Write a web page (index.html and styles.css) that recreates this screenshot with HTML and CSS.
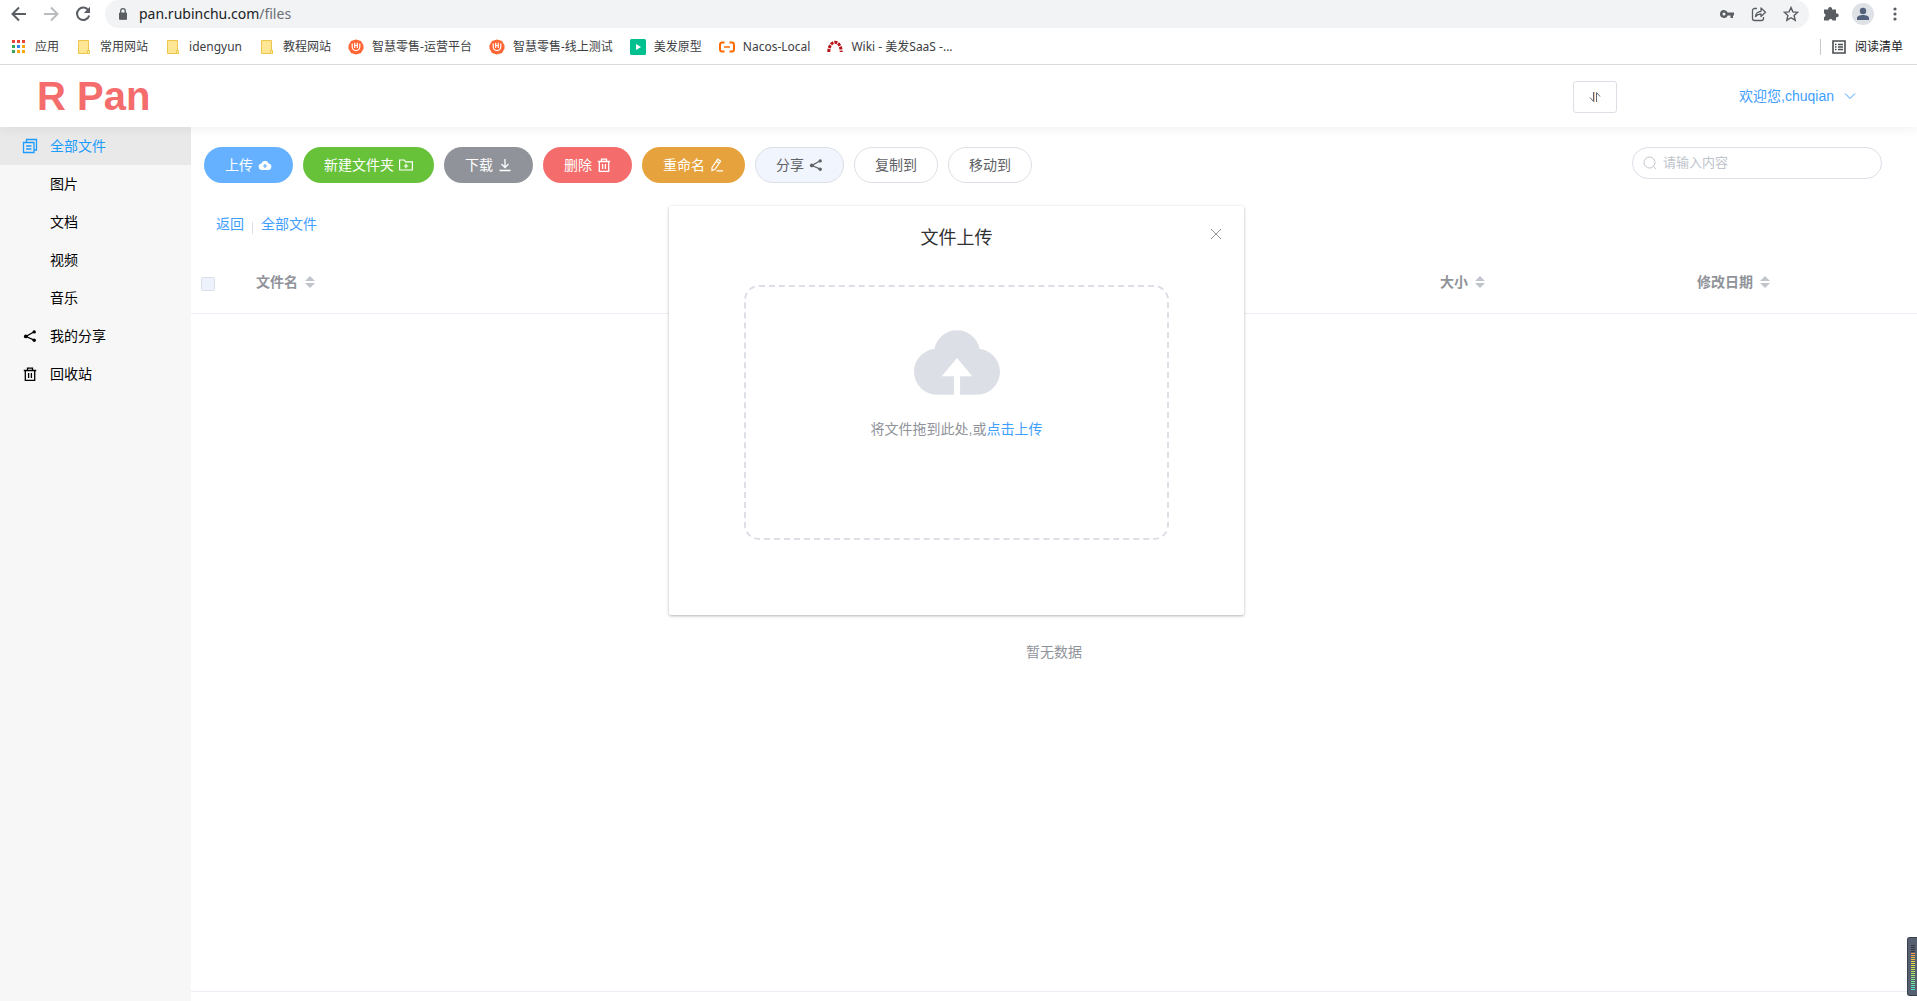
FILE: index.html
```html
<!DOCTYPE html>
<html lang="zh-CN">
<head>
<meta charset="utf-8">
<title>R Pan</title>
<link rel="stylesheet" href="styles.css">
</head>
<body>
<svg class="sprite" aria-hidden="true">
  <symbol id="cloud" viewBox="64 192 896 672"><path fill="currentColor" d="M544 864V672h128L512 480 352 672h128v192H320v-1.600c-5.376.32-10.496 1.600-16 1.600A240 240 0 0 1 64 624c0-123.136 93.120-223.488 212.608-237.248A239.808 239.808 0 0 1 512 192a239.872 239.872 0 0 1 235.456 194.752c119.488 13.760 212.480 114.112 212.480 237.248a240 240 0 0 1-240 240c-5.376 0-10.560-1.280-16-1.600v1.600H544z"/></symbol>
  <symbol id="folder" viewBox="0 0 16 16"><path d="M2.500 1.500h10v10.500h1v2.500h-11z" fill="#ffe694" stroke="#edc548"/><path d="M11.500 14.500v-3h2v3z" fill="#fff0b8" stroke="#edc548"/></symbol>
  <symbol id="hex" viewBox="0 0 16 16"><path d="M8 .5l5 1.500 2.500 4.500v3L13 14l-5 1.500L3 14 .5 9.500v-3L3 2z" fill="#ff6633"/><path d="M4.200 4.500v3.300c0 5 7.600 5 7.600 0V4.500M6.700 3.800v5.200M9.300 3.800v5.200M6.700 6.500h2.600" fill="none" stroke="#fff" stroke-width="1.200"/></symbol>
  <symbol id="share" viewBox="0 0 14 14"><path d="M11.200 2.800L3 7.500l8.200 3.700" fill="none" stroke="currentColor" stroke-width="1.300"/><g fill="currentColor"><circle cx="11.200" cy="2.900" r="1.700"/><circle cx="2.800" cy="7.400" r="1.900"/><circle cx="11.200" cy="11.300" r="1.700"/></g></symbol>
  <symbol id="trash" viewBox="0 0 14 14"><path d="M.8 3.500h12.400M4.500 3.300V1.200h5v2.100M2.300 3.500v9.800h9.400V3.500M5.600 6v5M8.400 6v5" fill="none" stroke="currentColor" stroke-width="1.300"/></symbol>
  <symbol id="sort" viewBox="0 0 10 12"><path d="M0 5l5-5 5 5zM0 7h10l-5 5z" fill="#c0c4cc"/></symbol>
</svg>

<header class="browser">
  <div class="toolbar">
    <button class="tool" aria-label="后退"><svg viewBox="0 0 16 16"><path d="M15 8H2M8 1.500L1.500 8 8 14.500" fill="none" stroke="#5a5e63" stroke-width="2"/></svg></button>
    <button class="tool" aria-label="前进"><svg viewBox="0 0 16 16"><path d="M1 8h13M8 1.500L14.500 8 8 14.500" fill="none" stroke="#b9bbbe" stroke-width="2"/></svg></button>
    <button class="tool" aria-label="刷新"><svg viewBox="0 0 16 16"><path d="M13.500 4.500A6.200 6.200 0 1 0 14.200 9.500" fill="none" stroke="#5a5e63" stroke-width="2"/><path d="M15 .8V7H8.800z" fill="#5a5e63"/></svg></button>
    <div class="omnibox">
      <svg class="lock" viewBox="0 0 10 12"><path d="M1.500 5h7v6.300h-7z" fill="#5a5e63" stroke="#5a5e63" stroke-linejoin="round"/><path d="M2.700 5V3a2.300 2.300 0 0 1 4.600 0v2" fill="none" stroke="#5a5e63" stroke-width="1.300"/></svg>
      <span class="url">pan.rubinchu.com<span class="path">/files</span></span>
      <svg class="ico" viewBox="0 0 16 16"><path d="M5 4a4 4 0 1 0 3.700 5.500h2.800V12h2.500V9.500h1v-3H8.700A4 4 0 0 0 5 4zm0 2.500a1.500 1.500 0 1 1 0 3 1.500 1.500 0 0 1 0-3z" fill="#5a5e63"/></svg>
      <svg class="ico" viewBox="0 0 16 16"><path d="M6 2.500H3.500a2 2 0 0 0-2 2v8a2 2 0 0 0 2 2h7a2 2 0 0 0 2-2V11M4.500 10.500c.3-3.500 2.500-5 5.500-5.200V2l4.500 4.200L10 10.500V8C7.500 8 6 8.800 4.500 10.500z" fill="none" stroke="#5a5e63" stroke-width="1.300" stroke-linejoin="round"/></svg>
      <svg class="ico" viewBox="0 0 16 16"><path d="M8 1.500l1.900 4.400 4.800.4-3.600 3.200 1.100 4.700L8 11.700l-4.200 2.500 1.100-4.700L1.300 6.300l4.800-.4z" fill="none" stroke="#5a5e63" stroke-width="1.400"/></svg>
    </div>
    <svg class="ico" viewBox="0 0 16 16"><path d="M1 3.500h4.200a2 2 0 1 1 3.800 0h4v4a2 2 0 1 1 0 3.700V14.500H9.500a1.900 1.900 0 0 0-3.700 0H1v-3.500a1.900 1.900 0 0 0 0-3.700z" fill="#5a5e63"/></svg>
    <svg class="avatar" viewBox="0 0 22 22"><circle cx="11" cy="11" r="11" fill="#dee1e6"/><circle cx="11" cy="8" r="3.200" fill="#53627c"/><path d="M5 17v-2c0-4 12-4 12 0v2z" fill="#53627c"/></svg>
    <svg class="ico" viewBox="0 0 16 16"><g fill="#5a5e63"><circle cx="8" cy="3" r="1.600"/><circle cx="8" cy="8" r="1.600"/><circle cx="8" cy="13" r="1.600"/></g></svg>
  </div>
  <nav class="bookmarks">
    <a href="#"><svg viewBox="0 0 16 16"><path d="M1 1h3v3H1zM6 1h3v3H6zM11 1h3v3h-3z" fill="#ea4335"/><path d="M1 6h3v3H1zM1 11h3v3H1z" fill="#34a853"/><path d="M6 6h3v3H6z" fill="#2a86f0"/><path d="M11 6h3v3h-3zM6 11h3v3H6zM11 11h3v3h-3z" fill="#fba70c"/></svg>应用</a>
    <a href="#"><svg><use href="#folder"/></svg>常用网站</a>
    <a href="#"><svg><use href="#folder"/></svg>idengyun</a>
    <a href="#"><svg><use href="#folder"/></svg>教程网站</a>
    <a href="#"><svg><use href="#hex"/></svg>智慧零售-运营平台</a>
    <a href="#"><svg><use href="#hex"/></svg>智慧零售-线上测试</a>
    <a href="#"><svg viewBox="0 0 16 16"><rect width="16" height="16" rx="1.500" fill="#00c08f"/><path d="M6 5l5 3-5 3z" fill="#fff"/></svg>美发原型</a>
    <a href="#"><svg viewBox="0 0 16 16"><path d="M5.500 3.500H3Q1 3.500 1 6v4q0 2.500 2 2.500h2.500M10.500 3.500H13q2 0 2 2.500v4q0 2.500-2 2.500h-2.500" fill="none" stroke="#ff6a00" stroke-width="2"/><path d="M5 8h6" stroke="#ff6a00" stroke-width="1.500"/></svg>Nacos-Local</a>
    <a href="#"><svg viewBox="0 0 16 16"><path d="M1.800 13C2 0 14 0 14.200 13" fill="none" stroke="#b8151b" stroke-width="3" stroke-dasharray="3 1"/></svg>Wiki - 美发SaaS -...</a>
    <a class="reading" href="#"><svg viewBox="0 0 16 16"><path d="M2 2h12v12H2z" fill="none" stroke="#4a4d51" stroke-width="1.600"/><path d="M4 5.500h1.500M4 8h1.500M4 10.500h1.500M7 5.500h5M7 8h5M7 10.500h5" stroke="#4a4d51" stroke-width="1.300"/></svg>阅读清单</a>
  </nav>
</header>

<div class="app">
  <header class="app-header">
    <h1 class="logo">R Pan</h1>
    <button class="transfer" aria-label="传输列表"><svg viewBox="0 0 12 12"><path d="M1 6.500l3.500 4V1" fill="none" stroke="#5f6672"/><path d="M7.500 11V1.500l3.500 4" fill="none" stroke="#5f6672"/><path d="M5.500 1v10" stroke="#f0c49c"/></svg></button>
    <button class="user">欢迎您,chuqian<svg viewBox="0 0 12 12"><path d="M1 3.500l5 5 5-5" fill="none" stroke="#409eff"/></svg></button>
  </header>

  <div class="body">
    <nav class="sidebar">
      <a class="active" href="#"><svg viewBox="0 0 16 16"><path d="M4.500 4V1.500h10V12H12M1.500 4.500H12v10H1.500zM4 8h5.500M4 11h5.500" fill="none" stroke="currentColor" stroke-width="1.300"/></svg>全部文件</a>
      <a href="#"><svg></svg>图片</a>
      <a href="#"><svg></svg>文档</a>
      <a href="#"><svg></svg>视频</a>
      <a href="#"><svg></svg>音乐</a>
      <a href="#"><svg viewBox="-1 -1 16 16"><use href="#share" width="14" height="14"/></svg>我的分享</a>
      <a href="#"><svg viewBox="0 0 16 16"><use href="#trash" x="1" y="1" width="14" height="14"/></svg>回收站</a>
    </nav>

    <main class="content">
      <div class="actions">
        <button class="btn upload">上传<svg viewBox="0 0 14 14"><path d="M3.500 12A3.300 3.300 0 0 1 3.300 5.500a3.900 3.900 0 0 1 7.400 0A3.300 3.300 0 0 1 10.500 12z" fill="#fff"/><path d="M7 6v4M5 8h4" stroke="#66b1ff" stroke-width="1.200"/></svg></button>
        <button class="btn create">新建文件夹<svg viewBox="0 0 14 14"><path d="M.6 2h4.600l1.400 1.800h6.800V12H.6zM7 5.800v4.400M4.800 8h4.400" fill="none" stroke="#fff" stroke-width="1.200"/></svg></button>
        <button class="btn download">下载<svg viewBox="0 0 14 14"><path d="M7 1v8.500M3.500 6L7 9.500 10.500 6M1.500 12.500h11" fill="none" stroke="#fff" stroke-width="1.300"/></svg></button>
        <button class="btn delete">删除<svg><use href="#trash"/></svg></button>
        <button class="btn rename">重命名<svg viewBox="0 0 14 14"><path d="M2 9.500L7.800 1.200l2.800 2L5 11.300l-3 1.200zM6.500 3.200l2.800 2M6.500 12.800H13" fill="none" stroke="#fff" stroke-width="1.200"/></svg></button>
        <button class="btn share">分享<svg><use href="#share"/></svg></button>
        <button class="btn">复制到</button>
        <button class="btn">移动到</button>
        <label class="search">
          <svg viewBox="0 0 14 14"><circle cx="6.500" cy="6.500" r="5.500" fill="none" stroke="#c0c4cc"/><path d="M10.500 10.500l2.500 2.500" stroke="#c0c4cc"/></svg>
          <input type="text" placeholder="请输入内容" aria-label="搜索">
        </label>
      </div>
      <div class="crumbs"><a href="#">返回</a><i></i><a href="#">全部文件</a></div>
      <table class="files">
        <thead>
          <tr>
            <th class="pick"><input type="checkbox" aria-label="全选"></th>
            <th>文件名<svg><use href="#sort"/></svg></th>
            <th class="size">大小<svg><use href="#sort"/></svg></th>
            <th class="date">修改日期<svg><use href="#sort"/></svg></th>
          </tr>
        </thead>
      </table>
      <div class="empty">暂无数据</div>
    </main>
  </div>

  <section class="dialog" role="dialog" aria-labelledby="dialog-title">
    <h2 id="dialog-title">文件上传</h2>
    <button class="close" aria-label="关闭"><svg viewBox="0 0 12 12"><path d="M1 1l10 10M11 1L1 11" stroke="#909399"/></svg></button>
    <div class="drop">
      <svg><use href="#cloud"/></svg>
      <p>将文件拖到此处,或<a href="#">点击上传</a></p>
    </div>
  </section>
</div>

<div class="meter"><div class="off"></div><div class="on"></div></div>
</body>
</html>
```
FILE: styles.css
```css
* {
  box-sizing: border-box;
}

body {
  margin: 0;
  min-height: 100vh;
  display: flex;
  flex-direction: column;
  overflow-x: hidden;
  background: #fff;
  color: #606266;
  font: 14px/20px "Liberation Sans", "Noto Sans CJK SC", sans-serif;
}

button,
input {
  font: inherit;
  color: inherit;
}

button {
  padding: 0;
  border: 0;
  background: none;
  cursor: pointer;
}

a {
  color: inherit;
  text-decoration: none;
}

svg {
  flex: none;
}

.sprite {
  position: absolute;
  width: 0;
  height: 0;
}

/* Browser bars */
.browser {
  height: 65px;
  border-bottom: 1px solid #d9dbde;
  font-family: "Noto Sans", "Noto Sans CJK SC", sans-serif;
}

.toolbar {
  display: flex;
  align-items: center;
  gap: 16px;
  height: 28px;
  padding: 0 14px 0 11px;
}

.tool,
.tool svg,
.ico {
  display: block;
  width: 16px;
  height: 16px;
}

.omnibox {
  flex: 1;
  display: flex;
  align-items: center;
  gap: 16px;
  height: 28px;
  margin: 0 -2px;
  padding: 0 10px 0 13px;
  border-radius: 14px;
  background: #f1f3f4;
}

.lock {
  width: 10px;
  height: 12px;
}

.url {
  flex: 1;
  margin-left: -5px;
  color: #202124;
}

.path {
  color: #6b6f74;
}

.toolbar > .avatar {
  width: 22px;
  height: 22px;
  margin: 0 -3px;
}

.bookmarks {
  display: flex;
  align-items: center;
  gap: 17px;
  height: 37px;
  padding: 0 14px 0 11px;
  color: #3c4043;
  font-size: 12px;
  line-height: 16px;
}

.bookmarks a {
  display: flex;
  align-items: center;
  gap: 8px;
  white-space: nowrap;
}

.bookmarks svg {
  width: 16px;
  height: 16px;
}

.bookmarks .reading {
  margin-left: auto;
  padding-left: 10px;
  border-left: 1px solid #c6c9cc;
  color: #202124;
}

/* Application */
.app {
  position: relative;
  flex: 1;
  display: flex;
  flex-direction: column;
}

.app-header {
  position: relative;
  z-index: 1;
  display: flex;
  align-items: center;
  height: 62px;
  padding: 0 61px 0 37px;
  box-shadow: 0 2px 12px rgba(0, 0, 0, 0.06);
  clip-path: inset(0 0 -16px 0);
}

.logo {
  flex: 1;
  margin: 0;
  color: #f56c6c;
  font-size: 40px;
  line-height: 62px;
}

.transfer {
  display: grid;
  place-items: center;
  width: 44px;
  height: 32px;
  margin: 2px 122px 0 0;
  border: 1px solid #dcdfe6;
  border-radius: 3px;
}

.transfer svg,
.user svg,
.close svg {
  display: block;
  width: 12px;
  height: 12px;
}

.user {
  display: flex;
  align-items: center;
  gap: 10px;
  color: #409eff;
}

.body {
  flex: 1;
  display: flex;
}

.sidebar {
  flex: none;
  width: 191px;
  background: #f7f7f7;
  color: #000;
}

.sidebar a {
  display: flex;
  align-items: center;
  gap: 12px;
  height: 38px;
  padding-left: 22px;
}

.sidebar svg {
  width: 16px;
  height: 16px;
}

.sidebar .active {
  background: #e9e9e9;
  color: #1c9cff;
}

.content {
  flex: 1;
  display: flex;
  flex-direction: column;
  padding: 20px 0 9px;
}

.actions {
  display: flex;
  gap: 10px;
  padding: 0 35px 0 13px;
}

.btn {
  display: flex;
  align-items: center;
  gap: 5px;
  height: 36px;
  padding: 0 20px;
  border: 1px solid #dcdfe6;
  border-radius: 18px;
  background: #fff;
}

.btn svg,
.search svg {
  width: 14px;
  height: 14px;
}

.btn.upload,
.btn.create,
.btn.download,
.btn.delete,
.btn.rename {
  border-color: transparent;
  color: #fff;
}

.btn.upload {
  background-color: #66b1ff;
}

.btn.create {
  background-color: #67c23a;
}

.btn.download {
  background-color: #909399;
}

.btn.delete {
  background-color: #f56c6c;
}

.btn.rename {
  background-color: #e6a23c;
}

.btn.share {
  background-color: #f1f5fd;
}

.search {
  display: flex;
  align-items: center;
  gap: 6px;
  width: 250px;
  height: 32px;
  margin-left: auto;
  padding: 0 10px;
  border: 1px solid #dcdfe6;
  border-radius: 16px;
  font-size: 13px;
}

.search input {
  flex: 1;
  min-width: 0;
  padding: 0;
  border: 0;
  outline: 0;
  background: none;
}

.search input::placeholder {
  color: #c0c4cc;
}

.crumbs {
  display: flex;
  align-items: center;
  height: 20px;
  margin-top: 31px;
  padding-left: 25px;
  color: #409eff;
}

.crumbs i {
  align-self: flex-end;
  width: 1px;
  height: 12px;
  margin: 0 8px;
  background: #dcdfe6;
}

.files {
  width: 100%;
  margin-top: 18px;
  border-collapse: collapse;
  table-layout: fixed;
  color: #909399;
}

.files th {
  height: 61px;
  padding: 0 10px;
  border-bottom: 1px solid #ebeef5;
  text-align: left;
}

.files svg {
  width: 10px;
  height: 12px;
  margin-left: 7px;
  vertical-align: -1px;
}

.files .pick {
  width: 55px;
}

.files .size {
  width: 257px;
}

.files .date {
  width: 230px;
}

.files input {
  appearance: none;
  display: block;
  width: 14px;
  height: 14px;
  margin: 4px 0 0;
  border: 1px solid #dcdfe6;
  border-radius: 2px;
  background: #edf2fc;
}

.empty {
  flex: 1;
  display: grid;
  place-items: center;
  border-bottom: 1px solid #ebeef5;
  color: #909399;
}

.dialog {
  position: absolute;
  z-index: 2;
  top: 141px;
  left: calc(50% - 2px);
  width: 30%;
  margin-left: -15%;
  padding: 20px 75px 75px;
  border-radius: 2px;
  background: #fff;
  box-shadow: 0 1px 3px rgba(0, 0, 0, 0.3);
}

.dialog h2 {
  margin: 0;
  color: #303133;
  font-size: 18px;
  font-weight: 400;
  line-height: 24px;
  text-align: center;
}

.close {
  position: absolute;
  top: 22px;
  right: 22px;
}

.drop {
  display: flex;
  flex-direction: column;
  align-items: center;
  height: 255px;
  margin-top: 35px;
  padding-top: 43px;
  border: 2px dashed #dcdfe6;
  border-radius: 15px;
  color: #909399;
}

.drop svg {
  width: 86px;
  height: 65px;
  color: #dcdfe6;
}

.drop p {
  margin: 24px 0 0;
}

.drop a {
  color: #409eff;
}

/* Level meter docked to the window edge */
.meter {
  position: fixed;
  z-index: 3;
  right: 0;
  bottom: 5px;
  width: 10px;
  height: 59px;
  padding: 7px 2px 7px 3px;
  border: 1px solid #3a404c;
  border-right: 0;
  border-radius: 3px 0 0 3px;
  background: #566070;
}

.meter div {
  width: 4px;
}

.off {
  height: 8px;
  background: repeating-linear-gradient(#343944 0 1px, transparent 1px 2px);
}

.on {
  height: 37px;
  background:
    repeating-linear-gradient(transparent 0 1px, #566070 1px 2px),
    linear-gradient(#ff9850, #f0dc40 25%, #a8ec70 60%, #40e8c8);
}
```
